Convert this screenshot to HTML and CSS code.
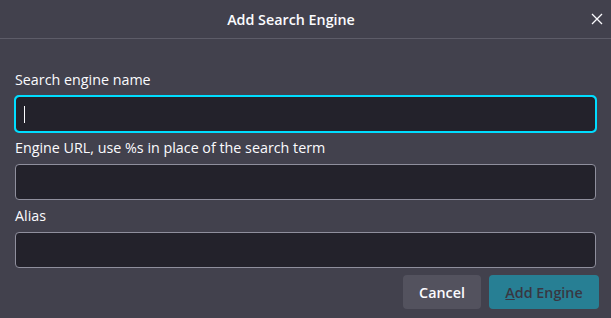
FILE: index.html
```html
<!DOCTYPE html>
<html>
<head>
  <title>Add Search Engine</title>
  <link rel="stylesheet" href="styles.css">
</head>
<body>
  <div class="dialog">
    <div class="dialog-header">
      <h3 class="dialog-title">Add Search Engine</h3>
      <button class="close-btn" aria-label="Close">
        <svg width="12" height="12" viewBox="0 0 12 12">
          <path d="M1 1 L11 11 M11 1 L1 11" stroke="#fbfbfe" stroke-width="1.3" fill="none"/>
        </svg>
      </button>
    </div>

    <div class="dialog-body">
      <label class="field-label" for="engineName">Search engine name</label>
      <div class="field-input focused" id="engineName"><span class="caret"></span></div>

      <label class="field-label" for="engineUrl">Engine URL, use %s in place of the search term</label>
      <div class="field-input" id="engineUrl"></div>

      <label class="field-label" for="engineAlias">Alias</label>
      <div class="field-input" id="engineAlias"></div>

      <div class="dialog-footer">
        <button class="btn cancel-btn">Cancel</button>
        <button class="btn primary-btn" disabled><span class="accesskey">A</span>dd Engine</button>
      </div>
    </div>
  </div>
</body>
</html>
```

FILE: styles.css
```css
:root {
  --background-color: #42414d;
  --field-background: #23222b;
  --field-border: #8f8f9d;
  --focus-color: #00ddff;
  --text-primary: #fbfbfe;
  --divider-color: #5d5c68;
  --button-background: #53525e;
}

body {
  margin: 0;
  background-color: var(--background-color);
  color: var(--text-primary);
  font-family: "Open Sans", "Noto Sans", sans-serif;
  font-size: 14.3px;
}

.dialog-header {
  display: flex;
  align-items: center;
  height: 38px;
  border-bottom: 1px solid var(--divider-color);
}

.dialog-title {
  flex: 1;
  margin: 0;
  text-align: center;
  font-size: 14.3px;
  font-weight: 600;
}

.close-btn {
  width: 29px;
  height: 38px;
  padding: 0;
  border: none;
  background: none;
  display: flex;
  align-items: center;
  justify-content: center;
}

.dialog-body {
  padding: 31px 15px 0 15px;
  display: flex;
  flex-direction: column;
}

.field-label {
  display: block;
  line-height: 20px;
  margin: 6px 0;
}

.field-label:first-child {
  margin-top: 0;
}

.field-input {
  height: 34px;
  background-color: var(--field-background);
  border: 1px solid var(--field-border);
  border-radius: 4px;
  display: flex;
  align-items: center;
  padding: 0 8px;
}

.field-input.focused {
  border-color: var(--focus-color);
  outline: 2px solid var(--focus-color);
  outline-offset: -1px;
}

.caret {
  width: 1px;
  height: 17px;
  background-color: var(--text-primary);
}

.dialog-footer {
  display: flex;
  justify-content: flex-end;
  gap: 8px;
  margin-top: 7px;
  margin-right: -3px;
}

.btn {
  height: 34px;
  border: none;
  border-radius: 4px;
  font-family: inherit;
  font-size: 14.3px;
  font-weight: 600;
  padding: 0 8px;
  white-space: nowrap;
}

.cancel-btn {
  background-color: var(--button-background);
  color: var(--text-primary);
  width: 78px;
}

.primary-btn {
  background-color: var(--focus-color);
  color: #2b2a33;
  opacity: 0.4;
  width: 110px;
}

.accesskey {
  text-decoration: underline;
}
```
